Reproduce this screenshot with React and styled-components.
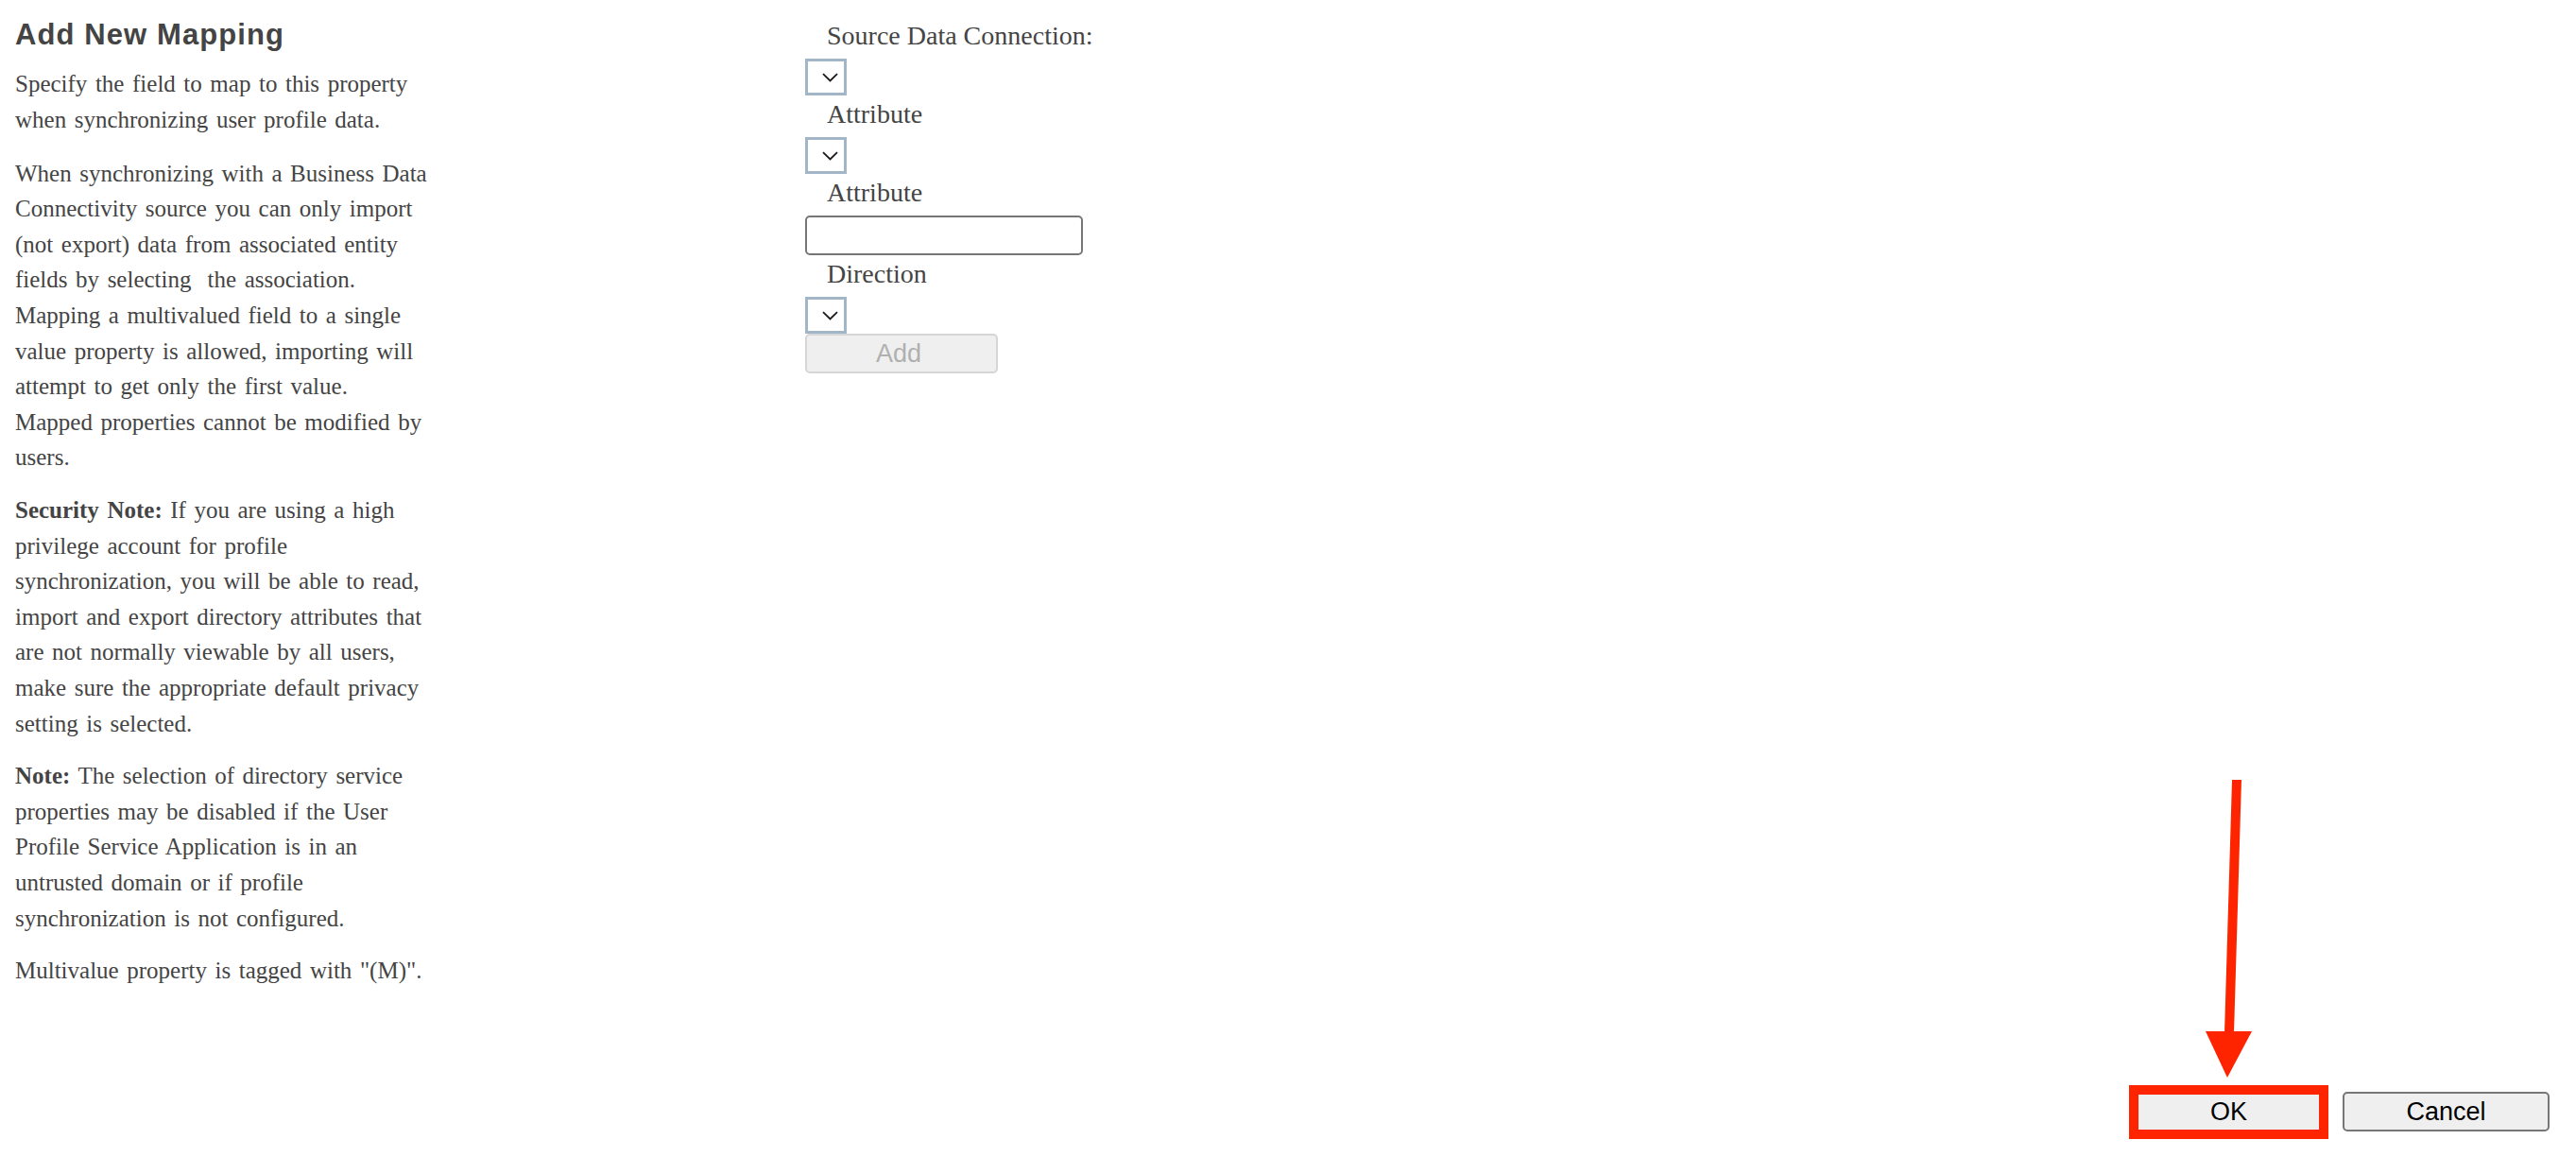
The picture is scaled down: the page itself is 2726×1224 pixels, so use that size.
import React from 'react'
import styled, { createGlobalStyle } from 'styled-components'

const GlobalStyle = createGlobalStyle`
  html, body {
    margin: 0;
    padding: 0;
    background: #fff;
  }
  body {
    font-family: "Liberation Serif", "Times New Roman", serif;
    color: #444;
  }
`

const Page = styled.div`
  position: relative;
  min-height: 100vh;
  display: flex;
  flex-direction: column;
  box-sizing: border-box;
`

const Columns = styled.div`
  display: grid;
  grid-template-columns: 852px 1fr;
  align-items: start;
`

const Help = styled.div`
  padding: 19px 0 0 16px;
  width: 441px;
`

const Title = styled.h2`
  margin: 0 0 15px;
  font-family: "Liberation Sans", Arial, sans-serif;
  font-size: 31px;
  line-height: 36px;
  font-weight: bold;
  letter-spacing: 1.1px;
  color: #444;
`

const Para = styled.p`
  margin: 0 0 ${({ $gap }) => $gap || 18}px;
  font-size: 25px;
  line-height: 37.6px;
  word-spacing: 2.3px;
`

const Form = styled.div`
  display: flex;
  flex-direction: column;
  align-items: flex-start;
  padding-top: 18px;
`

const Label = styled.div`
  margin: 2px 0 6px 23px;
  font-size: 28px;
  line-height: 36px;
  color: #444;
`

const SelectBox = styled.div`
  width: 44px;
  height: 39px;
  box-sizing: border-box;
  border: 3px solid #a2b6c8;
  display: flex;
  align-items: center;
  padding-left: 15px;
  background: #fff;
`

const TextInput = styled.input`
  width: 294px;
  height: 42px;
  box-sizing: border-box;
  border: 2px solid #767676;
  border-radius: 5px;
  background: #fff;
  outline: none;
  font-size: 24px;
`

const Button = styled.button`
  box-sizing: border-box;
  width: ${({ $w }) => $w}px;
  height: ${({ $h }) => $h}px;
  background: #efefef;
  border: 2px solid ${({ disabled }) => (disabled ? '#d6d6d6' : '#777')};
  border-radius: 5px;
  font-family: "Liberation Sans", Arial, sans-serif;
  font-size: 27px;
  color: ${({ disabled }) => (disabled ? '#b0b0b0' : '#000')};
  padding: 0 ${({ disabled }) => (disabled ? 6 : 0)}px 0 0;
  cursor: ${({ disabled }) => (disabled ? 'default' : 'pointer')};
`

const Footer = styled.div`
  margin-top: auto;
  display: flex;
  justify-content: flex-end;
  align-items: center;
  gap: 25px;
  padding: 0 28px 27px 0;
`

const OkWrap = styled.div`
  position: relative;
  display: flex;
`

const OkButton = styled(Button)`
  border: none;
  border-radius: 0;
  outline: 10px solid #ff2400;
`

const Arrow = styled.svg`
  position: absolute;
  left: 67px;
  bottom: calc(100% + 17px);
  overflow: visible;
`

const Chevron = () => (
  <svg width="17" height="10" viewBox="0 0 17 10">
    <path d="M1 1.2 L8.5 8.5 L16 1.2" fill="none" stroke="#1a1a1a" strokeWidth="1.8" />
  </svg>
)

export default function App () {
  return (
    <Page>
      <GlobalStyle />
      <Columns>
        <Help>
          <Title>Add New Mapping</Title>
          <Para $gap={19.5}>Specify the field to map to this property when synchronizing user profile data.</Para>
          <Para>
            When synchronizing with a Business Data Connectivity source you can only import (not export)
            data from associated entity fields by selecting&nbsp; the association. Mapping a multivalued
            field to a single value property is allowed, importing will attempt to get only the first
            value. Mapped properties cannot be modified by users.
          </Para>
          <Para>
            <b>Security Note:</b> If you are using a high privilege account for profile synchronization,
            you will be able to read, import and export directory attributes that are not normally
            viewable by all users, make sure the appropriate default privacy setting is selected.
          </Para>
          <Para>
            <b>Note:</b> The selection of directory service properties may be disabled if the User
            Profile Service Application is in an untrusted domain or if profile synchronization is not
            configured.
          </Para>
          <Para>Multivalue property is tagged with "(M)".</Para>
        </Help>
        <Form>
          <Label>Source Data Connection:</Label>
          <SelectBox><Chevron /></SelectBox>
          <Label>Attribute</Label>
          <SelectBox><Chevron /></SelectBox>
          <Label>Attribute</Label>
          <TextInput type="text" />
          <Label>Direction</Label>
          <SelectBox><Chevron /></SelectBox>
          <Button $w={204} $h={42} disabled>Add</Button>
        </Form>
      </Columns>
      <Footer>
        <OkWrap>
          <Arrow width="60" height="316" viewBox="0 0 60 316">
            <polygon points="32,0 42,0 34,268 24,268" fill="#ff2400" />
            <polygon points="4,266 53,266 27,315" fill="#ff2400" />
          </Arrow>
          <OkButton $w={191} $h={37}>OK</OkButton>
        </OkWrap>
        <Button $w={219} $h={42}>Cancel</Button>
      </Footer>
    </Page>
  )
}
